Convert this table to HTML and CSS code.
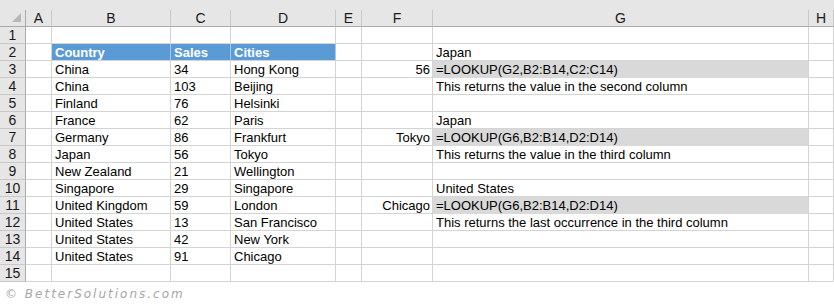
FILE: index.html
```html
<!DOCTYPE html>
<html>
<head>
<meta charset="utf-8">
<link rel="stylesheet" href="styles.css">
</head>
<body>
<div class="band"></div>
<div class="sheet">
  <div class="ch corner"><span class="tri"></span></div><div class="ch">A</div><div class="ch">B</div><div class="ch">C</div><div class="ch">D</div><div class="ch">E</div><div class="ch">F</div><div class="ch">G</div><div class="ch">H</div>

  <div class="rh">1</div><div class="c"></div><div class="c"></div><div class="c"></div><div class="c"></div><div class="c"></div><div class="c"></div><div class="c"></div><div class="c"></div>

  <div class="rh">2</div><div class="c"></div><div class="c hd">Country</div><div class="c hd">Sales</div><div class="c hd">Cities</div><div class="c"></div><div class="c"></div><div class="c">Japan</div><div class="c"></div>

  <div class="rh">3</div><div class="c"></div><div class="c">China</div><div class="c">34</div><div class="c">Hong Kong</div><div class="c"></div><div class="c r">56</div><div class="c fm">=LOOKUP(G2,B2:B14,C2:C14)</div><div class="c"></div>

  <div class="rh">4</div><div class="c"></div><div class="c">China</div><div class="c">103</div><div class="c">Beijing</div><div class="c"></div><div class="c"></div><div class="c">This returns the value in the second column</div><div class="c"></div>

  <div class="rh">5</div><div class="c"></div><div class="c">Finland</div><div class="c">76</div><div class="c">Helsinki</div><div class="c"></div><div class="c"></div><div class="c"></div><div class="c"></div>

  <div class="rh">6</div><div class="c"></div><div class="c">France</div><div class="c">62</div><div class="c">Paris</div><div class="c"></div><div class="c"></div><div class="c">Japan</div><div class="c"></div>

  <div class="rh">7</div><div class="c"></div><div class="c">Germany</div><div class="c">86</div><div class="c">Frankfurt</div><div class="c"></div><div class="c r">Tokyo</div><div class="c fm">=LOOKUP(G6,B2:B14,D2:D14)</div><div class="c"></div>

  <div class="rh">8</div><div class="c"></div><div class="c">Japan</div><div class="c">56</div><div class="c">Tokyo</div><div class="c"></div><div class="c"></div><div class="c">This returns the value in the third column</div><div class="c"></div>

  <div class="rh">9</div><div class="c"></div><div class="c">New Zealand</div><div class="c">21</div><div class="c">Wellington</div><div class="c"></div><div class="c"></div><div class="c"></div><div class="c"></div>

  <div class="rh">10</div><div class="c"></div><div class="c">Singapore</div><div class="c">29</div><div class="c">Singapore</div><div class="c"></div><div class="c"></div><div class="c">United States</div><div class="c"></div>

  <div class="rh">11</div><div class="c"></div><div class="c">United Kingdom</div><div class="c">59</div><div class="c">London</div><div class="c"></div><div class="c r">Chicago</div><div class="c fm">=LOOKUP(G6,B2:B14,D2:D14)</div><div class="c"></div>

  <div class="rh">12</div><div class="c"></div><div class="c">United States</div><div class="c">13</div><div class="c">San Francisco</div><div class="c"></div><div class="c"></div><div class="c">This returns the last occurrence in the third column</div><div class="c"></div>

  <div class="rh">13</div><div class="c"></div><div class="c">United States</div><div class="c">42</div><div class="c">New York</div><div class="c"></div><div class="c"></div><div class="c"></div><div class="c"></div>

  <div class="rh">14</div><div class="c"></div><div class="c">United States</div><div class="c">91</div><div class="c">Chicago</div><div class="c"></div><div class="c"></div><div class="c"></div><div class="c"></div>

  <div class="rh">15</div><div class="c"></div><div class="c"></div><div class="c"></div><div class="c"></div><div class="c"></div><div class="c"></div><div class="c"></div><div class="c"></div>
</div>
<div class="mark">© BetterSolutions.com</div>
</body>
</html>
```

FILE: styles.css
```css
* { box-sizing: border-box; }
html, body { margin: 0; padding: 0; background: #ffffff; }
body {
  width: 834px;
  height: 305px;
  overflow: hidden;
  font-family: "Liberation Sans", Arial, sans-serif;
  font-size: 13px;
  color: #000;
}
.band {
  height: 10px;
  background: #e6e6e6;
}
.sheet {
  display: grid;
  grid-template-columns: 26px 26px 119px 60px 105px 26px 71px 376px 25px;
  grid-template-rows: 17px repeat(15, 17px);
}
.ch {
  background: #e6e6e6;
  border-right: 1px solid #c8c8c8;
  border-bottom: 1px solid #ababab;
  text-align: center;
  line-height: 16px;
  font-size: 14px;
  color: #1a1a1a;
}
.corner {
  position: relative;
  border-color: #e6e6e6 #ababab #ababab #e6e6e6;
}
.tri {
  position: absolute;
  right: 4px;
  bottom: 4px;
  width: 0;
  height: 0;
  border-left: 9px solid transparent;
  border-bottom: 9px solid #b7b7b7;
}
.rh {
  background: #e6e6e6;
  border-right: 1px solid #ababab;
  border-bottom: 1px solid #c8c8c8;
  text-align: center;
  line-height: 16px;
  font-size: 14px;
  color: #1a1a1a;
}
.c {
  border-right: 1px solid #d4d4d4;
  border-bottom: 1px solid #d4d4d4;
  padding: 1px 2px 0 3px;
  line-height: 16px;
  white-space: nowrap;
  overflow: visible;
}
.hd {
  background: #5b9bd5;
  color: #ffffff;
  font-weight: bold;
  border-right-color: #a9c8e8;
}
.fm {
  background: #d9d9d9;
  border-bottom-color: #d9d9d9;
  border-right-color: #d4d4d4;
}
.r { text-align: right; }
.mark {
  padding: 5px 0 0 5px;
  font-family: "DejaVu Sans", sans-serif;
  font-style: italic;
  font-size: 12px;
  letter-spacing: 2px;
  color: #a6a6a6;
}
```
